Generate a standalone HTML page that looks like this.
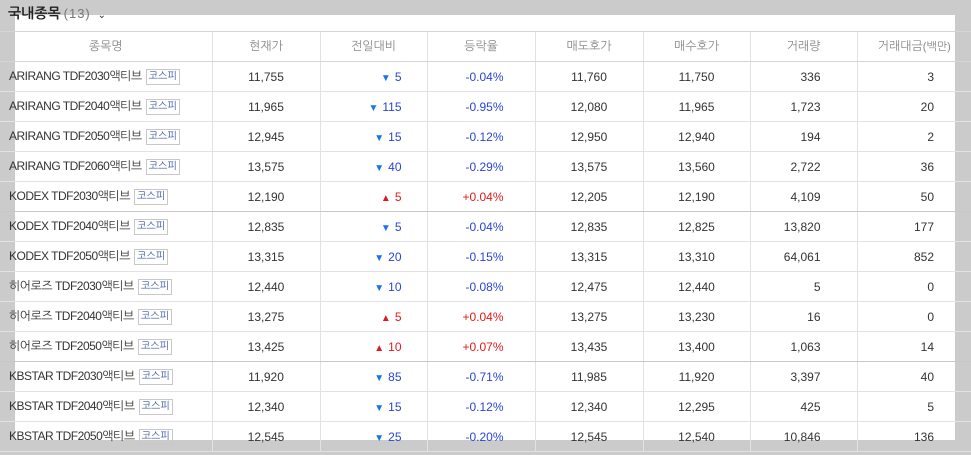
<!DOCTYPE html>
<html><head><meta charset="utf-8"><style>
body{margin:0;width:971px;height:455px;background:#cbcbcb;position:relative;overflow:hidden;font-family:"Liberation Sans","NanumGothic",sans-serif;}
#w{position:absolute;left:15px;top:15px;width:940px;height:425px;background:#fff;}
#t{position:absolute;left:8px;top:5px;font-size:14px;font-weight:bold;color:#222;}
#t span{font-weight:normal;color:#777;font-size:13px;margin-left:3px;letter-spacing:1px;}
table{position:absolute;left:0;top:31px;border-collapse:collapse;table-layout:fixed;width:971px;font-size:12px;color:#333;}
td,th{height:29px;border-bottom:1px solid #e2e2e2;border-left:1px solid #e2e2e2;padding:0;white-space:nowrap;}
td:first-child,th:first-child{border-left:none;}
th{font-weight:normal;color:#888;height:29px;border-top:1px solid #d5d5d5;border-bottom:1px solid #d5d5d5;}
tr.g td{border-bottom:1px solid #c8c8c8;}
td.n{padding-left:9px;text-align:left;letter-spacing:-0.5px;}
td.c{text-align:center;}
td.r1{text-align:right;padding-right:25px;}
td.r2{text-align:right;padding-right:31px;}
td.r3{text-align:right;padding-right:36px;}
td.r4{text-align:right;padding-right:37px;}
.b{display:inline-block;border:1px solid #c8c8c8;color:#3b56a3;font-size:10px;line-height:14px;padding:0 2px;margin-left:4px;vertical-align:1px;letter-spacing:0;}
.d{color:#2945d6}.u{color:#e0191a}
.d i,.u i{font-style:normal;font-size:10px;margin-right:4px;vertical-align:0}
.d i{color:#1a73e8}
</style></head><body>
<div id="w"></div>
<div id="t">국내종목<span>(13)</span> <span style="font-size:10px;color:#333">&#8964;</span></div>
<table>
<colgroup><col style="width:212px"><col style="width:108px"><col style="width:107px"><col style="width:108px"><col style="width:108px"><col style="width:107px"><col style="width:107px"><col style="width:114px"></colgroup>
<tr><th>종목명</th><th>현재가</th><th>전일대비</th><th>등락율</th><th>매도호가</th><th>매수호가</th><th>거래량</th><th>거래대금<span style="font-size:11px">(백만)</span></th></tr>
<tr><td class="n">ARIRANG TDF2030액티브<span class="b">코스피</span></td><td class="c">11,755</td><td class="r1 d"><i>▼</i>5</td><td class="r2 d">-0.04%</td><td class="c">11,760</td><td class="c">11,750</td><td class="r3">336</td><td class="r4">3</td></tr>
<tr><td class="n">ARIRANG TDF2040액티브<span class="b">코스피</span></td><td class="c">11,965</td><td class="r1 d"><i>▼</i>115</td><td class="r2 d">-0.95%</td><td class="c">12,080</td><td class="c">11,965</td><td class="r3">1,723</td><td class="r4">20</td></tr>
<tr><td class="n">ARIRANG TDF2050액티브<span class="b">코스피</span></td><td class="c">12,945</td><td class="r1 d"><i>▼</i>15</td><td class="r2 d">-0.12%</td><td class="c">12,950</td><td class="c">12,940</td><td class="r3">194</td><td class="r4">2</td></tr>
<tr><td class="n">ARIRANG TDF2060액티브<span class="b">코스피</span></td><td class="c">13,575</td><td class="r1 d"><i>▼</i>40</td><td class="r2 d">-0.29%</td><td class="c">13,575</td><td class="c">13,560</td><td class="r3">2,722</td><td class="r4">36</td></tr>
<tr class="g"><td class="n">KODEX TDF2030액티브<span class="b">코스피</span></td><td class="c">12,190</td><td class="r1 u"><i>▲</i>5</td><td class="r2 u">+0.04%</td><td class="c">12,205</td><td class="c">12,190</td><td class="r3">4,109</td><td class="r4">50</td></tr>
<tr><td class="n">KODEX TDF2040액티브<span class="b">코스피</span></td><td class="c">12,835</td><td class="r1 d"><i>▼</i>5</td><td class="r2 d">-0.04%</td><td class="c">12,835</td><td class="c">12,825</td><td class="r3">13,820</td><td class="r4">177</td></tr>
<tr><td class="n">KODEX TDF2050액티브<span class="b">코스피</span></td><td class="c">13,315</td><td class="r1 d"><i>▼</i>20</td><td class="r2 d">-0.15%</td><td class="c">13,315</td><td class="c">13,310</td><td class="r3">64,061</td><td class="r4">852</td></tr>
<tr><td class="n">히어로즈 TDF2030액티브<span class="b">코스피</span></td><td class="c">12,440</td><td class="r1 d"><i>▼</i>10</td><td class="r2 d">-0.08%</td><td class="c">12,475</td><td class="c">12,440</td><td class="r3">5</td><td class="r4">0</td></tr>
<tr><td class="n">히어로즈 TDF2040액티브<span class="b">코스피</span></td><td class="c">13,275</td><td class="r1 u"><i>▲</i>5</td><td class="r2 u">+0.04%</td><td class="c">13,275</td><td class="c">13,230</td><td class="r3">16</td><td class="r4">0</td></tr>
<tr class="g"><td class="n">히어로즈 TDF2050액티브<span class="b">코스피</span></td><td class="c">13,425</td><td class="r1 u"><i>▲</i>10</td><td class="r2 u">+0.07%</td><td class="c">13,435</td><td class="c">13,400</td><td class="r3">1,063</td><td class="r4">14</td></tr>
<tr><td class="n">KBSTAR TDF2030액티브<span class="b">코스피</span></td><td class="c">11,920</td><td class="r1 d"><i>▼</i>85</td><td class="r2 d">-0.71%</td><td class="c">11,985</td><td class="c">11,920</td><td class="r3">3,397</td><td class="r4">40</td></tr>
<tr><td class="n">KBSTAR TDF2040액티브<span class="b">코스피</span></td><td class="c">12,340</td><td class="r1 d"><i>▼</i>15</td><td class="r2 d">-0.12%</td><td class="c">12,340</td><td class="c">12,295</td><td class="r3">425</td><td class="r4">5</td></tr>
<tr><td class="n">KBSTAR TDF2050액티브<span class="b">코스피</span></td><td class="c">12,545</td><td class="r1 d"><i>▼</i>25</td><td class="r2 d">-0.20%</td><td class="c">12,545</td><td class="c">12,540</td><td class="r3">10,846</td><td class="r4">136</td></tr>
</table>
</body></html>
